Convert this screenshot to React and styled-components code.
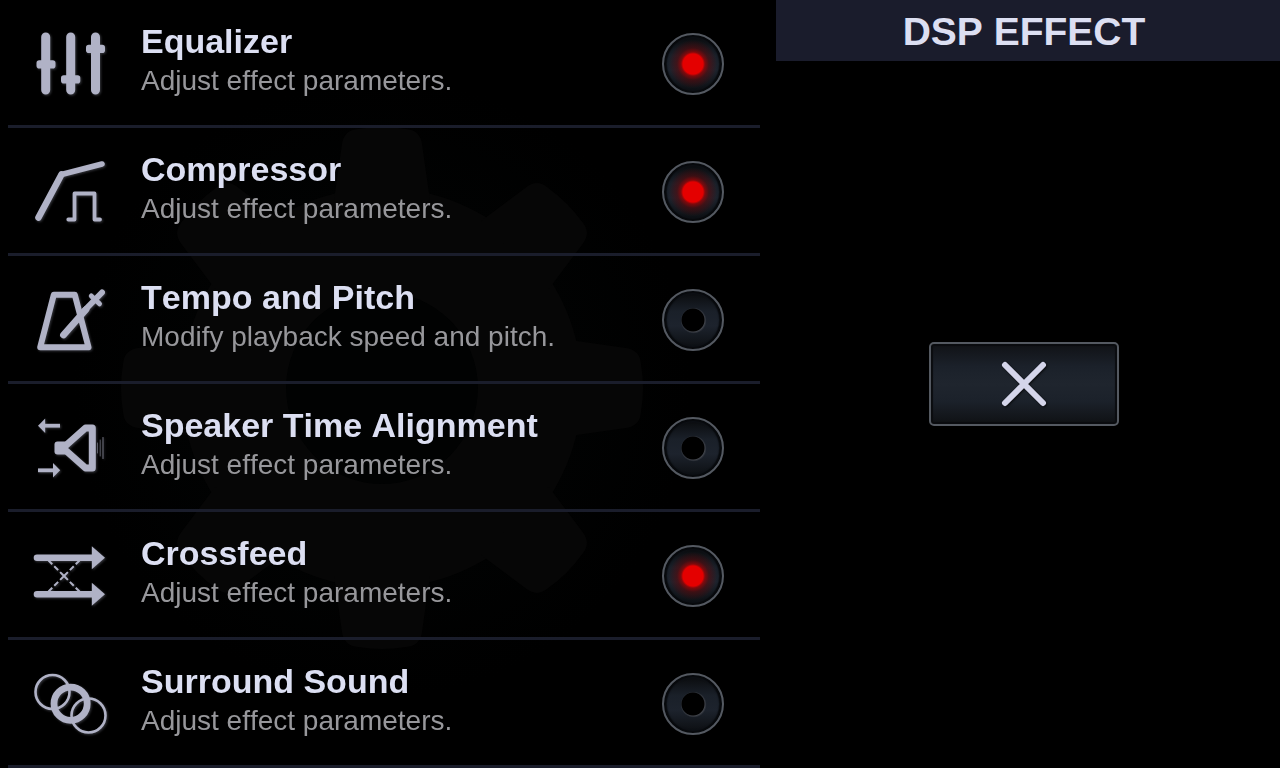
import React, { useState } from 'react'
import styled, { createGlobalStyle, ThemeProvider } from 'styled-components'

const theme = {
  bg: '#000000',
  line: '#1a1d2b',
  bar: '#1a1c2c',
  title: '#dcdff2',
  text: '#97979b',
  icon: '#b0b2c6',
  rim: '#545961',
}

const GlobalStyle = createGlobalStyle`
  *, *::before, *::after {
    box-sizing: border-box;
  }

  body {
    margin: 0;
    background: #000000;
    font-family: 'Liberation Sans', Arial, sans-serif;
    font-kerning: none;
  }
`

const Screen = styled.div`
  display: grid;
  grid-template-columns: 3fr 2fr;
  height: 100vh;
  overflow: hidden;
  background: ${({ theme }) => theme.bg};
`

const ListPane = styled.main`
  position: relative;
  min-width: 0;
  overflow: hidden;
  padding: 0 8px;
`

const Watermark = styled.svg`
  position: absolute;
  inset: 0;
  width: 100%;
  height: 100%;
  pointer-events: none;
`

const EffectList = styled.ul`
  position: relative;
  margin: 0;
  padding: 0;
  list-style: none;
`

const EffectRow = styled.li`
  display: flex;
  align-items: center;
  min-height: 128px;
  padding: 0 36px 0 12px;
  box-shadow: inset 0 -3px 0 ${({ theme }) => theme.line};
`

const Icon = styled.svg`
  flex: none;
  width: 100px;
  height: 96px;
  margin-right: 21px;
  fill: none;
  stroke: ${({ theme }) => theme.icon};
  stroke-linecap: round;
  stroke-linejoin: round;
  filter: drop-shadow(1px 1px 1px rgba(176, 178, 198, 0.3));
`

const Texts = styled.div`
  flex: 1;
  min-width: 0;
  padding-bottom: 6px;
`

const EffectName = styled.label`
  display: block;
  font-size: 34px;
  font-weight: 700;
  line-height: 40px;
  color: ${({ theme }) => theme.title};
`

const EffectHint = styled.p`
  margin: 0;
  font-size: 28px;
  line-height: 40px;
  color: ${({ theme }) => theme.text};
`

const Led = styled.input.attrs({ type: 'checkbox' })`
  flex: none;
  appearance: none;
  width: 62px;
  height: 62px;
  margin: 0;
  border: 2px solid ${({ theme }) => theme.rim};
  border-radius: 50%;
  cursor: pointer;
  box-shadow: inset 0 0 0 2px #07090c, inset 0 0 1px 3px #0d1015;
  background:
    radial-gradient(circle at 50% 50%, #000000 11px, transparent 12px),
    radial-gradient(circle at 51% 51%, #44474e 11px, transparent 13px),
    linear-gradient(#0c0e11 6%, #1a2029 35%, #1d232d 60%, #0e1115 94%);

  &:checked {
    background:
      radial-gradient(
        circle at 50% 50%,
        #e40000 10px,
        rgba(170, 0, 0, 0.7) 12px,
        rgba(120, 0, 0, 0.4) 16px,
        transparent 24px
      ),
      linear-gradient(#0c0e11 6%, #1a2029 35%, #1d232d 60%, #0e1115 94%);
  }
`

const SidePane = styled.aside`
  display: flex;
  flex-direction: column;
  min-width: 0;
`

const Heading = styled.h1`
  margin: 0;
  padding: 2px 8px 0 0;
  border-left: 8px solid ${({ theme }) => theme.bg};
  background: ${({ theme }) => theme.bar};
  font-size: 39px;
  line-height: 59px;
  text-align: center;
  color: ${({ theme }) => theme.title};
`

const SideBody = styled.div`
  flex: 1;
  display: flex;
  align-items: center;
  justify-content: center;
  padding-bottom: 61px;
`

const CloseButton = styled.button`
  display: flex;
  align-items: center;
  justify-content: center;
  width: 190px;
  height: 84px;
  padding: 0;
  border: 2px solid ${({ theme }) => theme.rim};
  border-radius: 5px;
  cursor: pointer;
  background: linear-gradient(#101216, #1b212a 28%, #1f252e 50%, #1b212a 72%, #0f1114);
  box-shadow: inset 0 0 1px 2px #0a0c0f;

  svg {
    width: 48px;
    height: 48px;
    stroke: #d4d5ea;
    stroke-width: 6;
    stroke-linecap: round;
    filter: drop-shadow(1px 1px 1px rgba(0, 0, 0, 0.7));
  }
`

function EqualizerIcon() {
  return (
    <Icon viewBox="0 0 100 96" aria-hidden="true">
      <path d="M25.7 21V74M50.7 21V74M75.5 21V74" strokeWidth="9" />
      <g fill="#b0b2c6" stroke="none">
        <rect x="16.5" y="44.2" width="19" height="8.3" rx="2.8" />
        <rect x="41" y="59.2" width="19.3" height="8.3" rx="2.8" />
        <rect x="66" y="28.8" width="19" height="8.3" rx="2.8" />
      </g>
    </Icon>
  )
}

function CompressorIcon() {
  return (
    <Icon viewBox="0 0 100 96" aria-hidden="true">
      <path d="M18.5 73.5L41.5 30.5" strokeWidth="6.6" />
      <path d="M41.5 30.5L82 20" strokeWidth="5.6" />
      <path d="M48.3 75.5H54.5V49.5H74.5V75.5H80" strokeWidth="3.8" />
    </Icon>
  )
}

function MetronomeIcon() {
  return (
    <Icon viewBox="0 0 100 96" aria-hidden="true">
      <path d="M33.8 22.8H54.8L68.5 75.3H20.2L33.8 22.8Z" strokeWidth="6" />
      <path d="M43.5 63L66 37.5" strokeWidth="6.8" />
      <path d="M62 41L82 20.5" strokeWidth="6" />
      <path d="M71.3 24L79.5 31.8" strokeWidth="5" />
    </Icon>
  )
}

function SpeakerIcon() {
  return (
    <Icon viewBox="0 0 100 96" aria-hidden="true">
      <path d="M43 48L65.5 28H72.3V68H65.5Z" strokeWidth="7" />
      <rect x="34.5" y="41.5" width="13" height="13" rx="3" fill="#b0b2c6" stroke="none" />
      <path d="M77.5 43V53" strokeWidth="1" opacity="0.45" />
      <path d="M80.2 40V56" strokeWidth="1" opacity="0.5" />
      <path d="M83 37.5V58.5" strokeWidth="1.2" opacity="0.55" />
      <path d="M40 25.7H24" strokeWidth="3.8" strokeLinecap="butt" />
      <path d="M25.2 18.5V33L18 25.7Z" fill="#b0b2c6" stroke="none" />
      <path d="M18 70.3H34" strokeWidth="3.8" strokeLinecap="butt" />
      <path d="M33 63V77.5L40.2 70.3Z" fill="#b0b2c6" stroke="none" />
    </Icon>
  )
}

function CrossfeedIcon() {
  return (
    <Icon viewBox="0 0 100 96" aria-hidden="true">
      <path d="M17 29.7H74M17 66.3H74" strokeWidth="6.6" />
      <path d="M71.8 18.3V41.3L85 29.8Z" fill="#b0b2c6" stroke="none" />
      <path d="M71.8 54.7V77.7L85 66.2Z" fill="#b0b2c6" stroke="none" />
      <path
        d="M44 48L28.5 32.5M44 48L59.5 32.5M44 48L28.5 63.5M44 48L59.5 63.5"
        strokeWidth="2"
        strokeLinecap="butt"
        strokeDasharray="5.5 2.8"
      />
    </Icon>
  )
}

function SurroundIcon() {
  return (
    <Icon viewBox="0 0 100 96" aria-hidden="true">
      <circle cx="32.5" cy="36" r="17" strokeWidth="2.6" />
      <circle cx="68.5" cy="59.5" r="17" strokeWidth="2.6" />
      <circle cx="50.6" cy="47.7" r="16.6" strokeWidth="6.8" />
    </Icon>
  )
}

const TEETH = [0, 45, 90, 135, 180, 225, 270, 315]

function GearWatermark() {
  return (
    <Watermark viewBox="0 0 768 768" aria-hidden="true">
      <radialGradient id="gear-glow">
        <stop offset="0.6" stopColor="#010202" />
        <stop offset="1" stopColor="#000000" />
      </radialGradient>
      <circle cx="382" cy="388" r="310" fill="url(#gear-glow)" />
      <mask id="gear-hole">
        <rect width="768" height="768" fill="#ffffff" />
        <circle cx="382" cy="388" r="96" fill="#000000" />
      </mask>
      <g fill="#060606" mask="url(#gear-hole)">
        <circle cx="382" cy="388" r="200" />
        {TEETH.map((angle) => (
          <path
            key={angle}
            d="M334 200L342 144Q344 130 358 129Q382 125 406 129Q420 130 422 144L430 200Z"
            transform={`rotate(${angle} 382 388)`}
          />
        ))}
      </g>
    </Watermark>
  )
}

const EFFECTS = [
  { id: 'equalizer', name: 'Equalizer', icon: EqualizerIcon, on: true },
  { id: 'compressor', name: 'Compressor', icon: CompressorIcon, on: true },
  {
    id: 'tempo',
    name: 'Tempo and Pitch',
    hint: 'Modify playback speed and pitch.',
    icon: MetronomeIcon,
    on: false,
  },
  { id: 'alignment', name: 'Speaker Time Alignment', icon: SpeakerIcon, on: false },
  { id: 'crossfeed', name: 'Crossfeed', icon: CrossfeedIcon, on: true },
  { id: 'surround', name: 'Surround Sound', icon: SurroundIcon, on: false },
]

function Effect({ id, name, hint = 'Adjust effect parameters.', icon: EffectIcon, on }) {
  const [active, setActive] = useState(on)

  return (
    <EffectRow>
      <EffectIcon />
      <Texts>
        <EffectName htmlFor={id}>{name}</EffectName>
        <EffectHint>{hint}</EffectHint>
      </Texts>
      <Led id={id} checked={active} onChange={(e) => setActive(e.target.checked)} />
    </EffectRow>
  )
}

export default function App() {
  return (
    <ThemeProvider theme={theme}>
      <GlobalStyle />
      <Screen>
        <ListPane>
          <GearWatermark />
          <EffectList>
            {EFFECTS.map((effect) => (
              <Effect key={effect.id} {...effect} />
            ))}
          </EffectList>
        </ListPane>
        <SidePane>
          <Heading>DSP EFFECT</Heading>
          <SideBody>
            <CloseButton type="button" aria-label="Close">
              <svg viewBox="0 0 48 48" aria-hidden="true">
                <path d="M5 5L43 43M43 5L5 43" />
              </svg>
            </CloseButton>
          </SideBody>
        </SidePane>
      </Screen>
    </ThemeProvider>
  )
}
